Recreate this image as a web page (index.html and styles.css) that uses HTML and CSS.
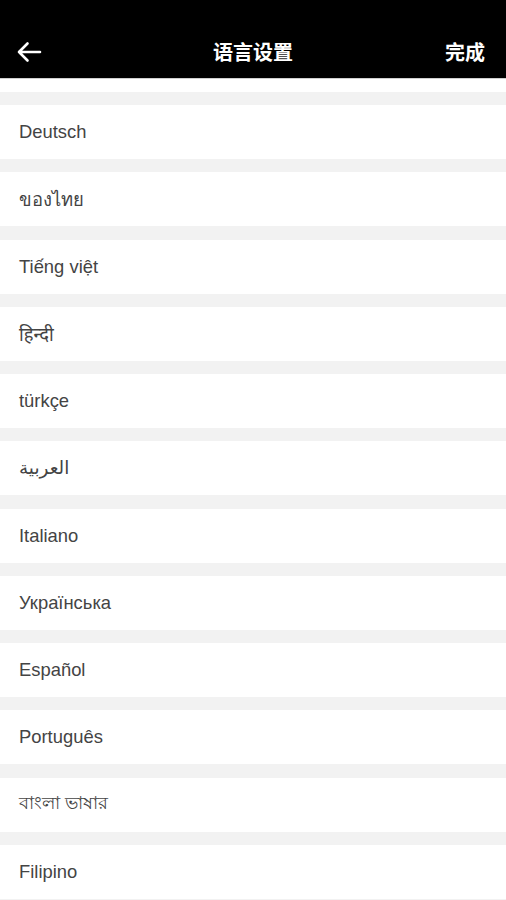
FILE: index.html
```html
<!DOCTYPE html>
<html lang="zh">
<head>
  <meta charset="UTF-8">
  <meta name="viewport" content="width=device-width, initial-scale=1.0">
  <title>语言设置</title>
  <link rel="stylesheet" href="styles.css">
</head>
<body>
  <header class="top-bar">
    <button class="back-btn" aria-label="返回">
      <svg width="26" height="22" viewBox="0 0 26 22">
        <path d="M24 11H3M11.5 2.5L3 11l8.5 8.5" fill="none" stroke="#fff" stroke-width="2.6" stroke-linecap="round" stroke-linejoin="round"/>
      </svg>
    </button>
    <h1 class="title">语言设置</h1>
    <span class="done">完成</span>
  </header>

  <div class="spacer"></div>

  <ul class="lang-list">
    <li>Deutsch</li>
    <li>ของไทย</li>
    <li>Tiếng việt</li>
    <li>हिन्दी</li>
    <li>türkçe</li>
    <li>العربية</li>
    <li>Italiano</li>
    <li>Українська</li>
    <li>Español</li>
    <li>Português</li>
    <li>বাংলা ভাষার</li>
    <li>Filipino</li>
  </ul>
</body>
</html>
```

FILE: styles.css
```css
body {
  margin: 0;
  padding: 0;
  font-family: "Liberation Sans", "DejaVu Sans", "Noto Sans", "Noto Sans CJK SC", sans-serif;
  background-color: #f2f2f2;
  overflow: hidden;
}

.top-bar {
  height: 79px;
  box-sizing: border-box;
  padding: 26px 21px 0 16px;
  background-color: #000;
  color: #fff;
  display: flex;
  align-items: center;
  justify-content: space-between;
  position: relative;
  border-bottom: 1px solid #cfcfcf;
}

.back-btn {
  background: none;
  border: none;
  padding: 0;
  display: flex;
  cursor: pointer;
}

.title {
  position: absolute;
  left: 0;
  right: 0;
  top: 26px;
  bottom: 0;
  margin: 0;
  display: flex;
  align-items: center;
  justify-content: center;
  font-family: "Noto Sans CJK SC", sans-serif;
  font-size: 20px;
  line-height: 1;
  font-weight: bold;
  pointer-events: none;
}

.done {
  font-family: "Noto Sans CJK SC", sans-serif;
  font-size: 20px;
  line-height: 1;
  font-weight: bold;
}

.spacer {
  height: 13px;
  background-color: #fff;
}

.lang-list {
  list-style: none;
  margin: 0;
  padding: 13px 0 0;
  display: flex;
  flex-direction: column;
  gap: 13.25px;
}

.lang-list li {
  height: 54px;
  padding-left: 19px;
  display: flex;
  align-items: center;
  background-color: #fff;
  color: #444;
  font-size: 18.4px;
}
```
